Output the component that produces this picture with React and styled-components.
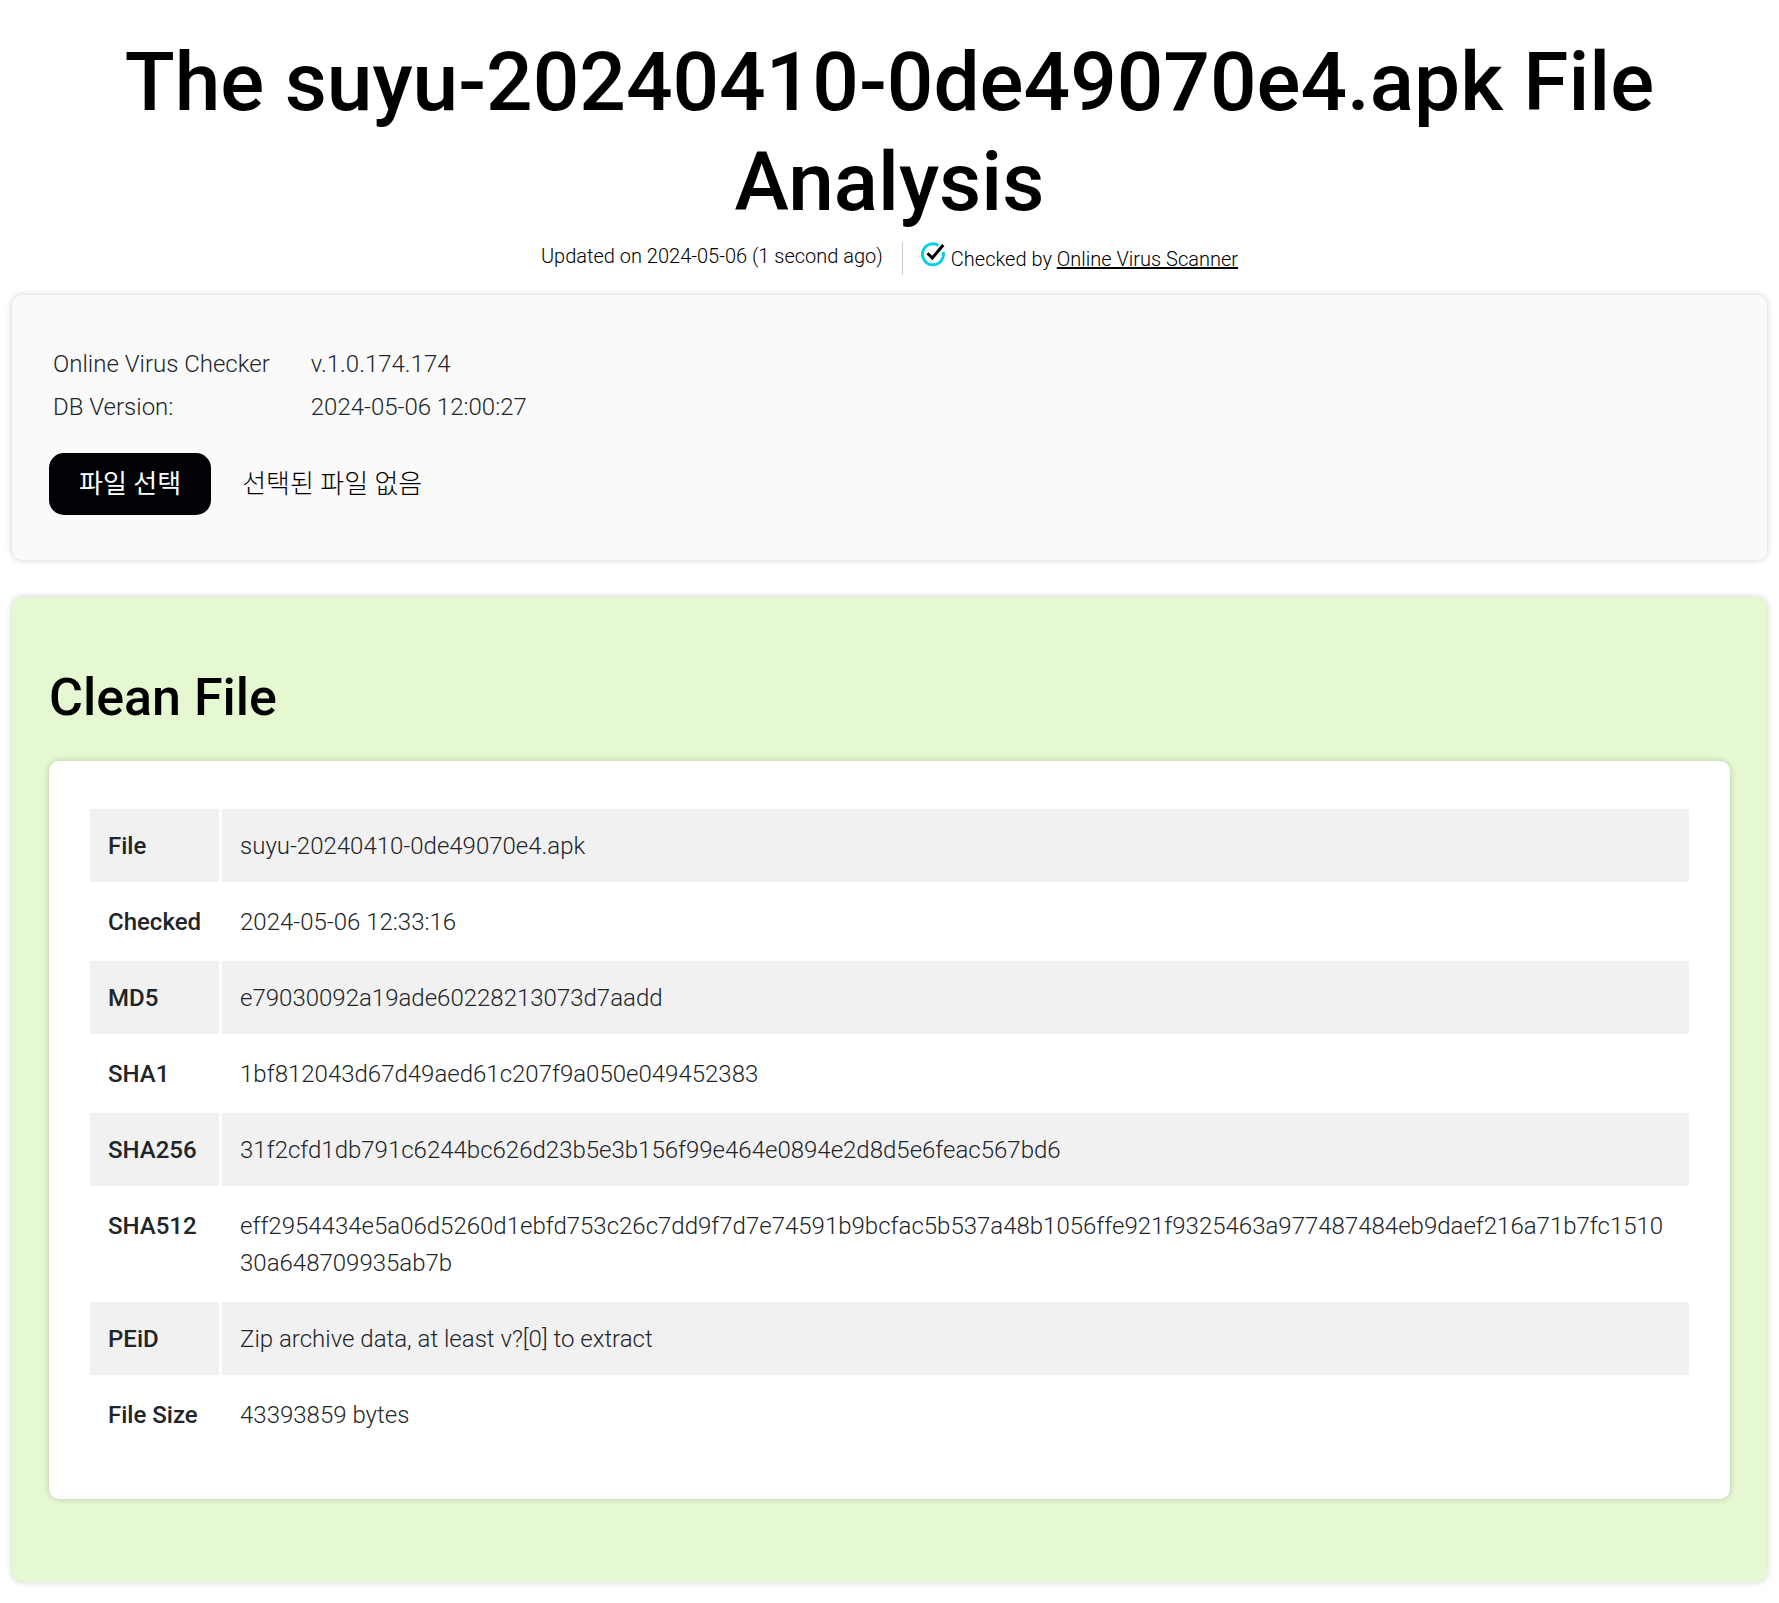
import React, { useRef, useState } from 'react';
import styled, { createGlobalStyle } from 'styled-components';

const GlobalStyle = createGlobalStyle`
  * {
    box-sizing: border-box;
  }
  body {
    margin: 0;
    background-color: #fff;
    color: #212529;
    font-family: Roboto, 'Noto Sans CJK KR', sans-serif;
    font-size: 24px;
    font-weight: 300;
    line-height: 37px;
  }
`
const Page = styled.main`
  padding: 32px 12px 20px;
`
const Title = styled.h1`
  margin: 0 auto;
  max-width: 1600px;
  color: #000;
  font-size: 82px;
  font-weight: 500;
  line-height: 100px;
  text-align: center;
`
const Meta = styled.div`
  display: flex;
  justify-content: center;
  margin: 10px 0 20px;
  color: #000;
  font-size: 20px;
  line-height: 32px;
`
const Updated = styled.div`
  padding: 0 19px 3px 0;
  line-height: 29px;
`
const CheckedBy = styled.div`
  padding-left: 18px;
  border-left: 1px solid #ccc;
`
const CheckIcon = styled.svg`
  width: 25px;
  height: 25px;
  margin-right: 5px;
  vertical-align: -1px;
`
const ScannerLink = styled.a`
  color: inherit;
  text-decoration: underline;
`
const Card = styled.section`
  padding: ${props => props.$padding};
  margin-bottom: ${props => props.$gap || '0'};
  border-radius: 10px;
  background-color: ${props => props.$color};
  box-shadow: 0 0 6px rgba(0, 0, 0, 0.2);
`
const VersionTable = styled.table`
  border-spacing: 2px;
  margin-bottom: 23px;

  th, td {
    padding: 2px;
    font-weight: 300;
    text-align: left;
  }
  th {
    padding-right: 37px;
  }
`
const FileRow = styled.div`
  display: flex;
  align-items: center;
  gap: 31px;
  color: #000;
  font-size: 26px;
`
const FileButton = styled.button`
  height: 62px;
  padding: 0 30px;
  border: 0;
  border-radius: 15px;
  background-color: #000205;
  color: #fff;
  font: inherit;
  font-weight: 400;
  cursor: pointer;
`
const Heading = styled.h2`
  margin: 0 0 32px;
  color: #000;
  font-size: 52px;
  font-weight: 500;
  line-height: 62px;
`
const ReportTable = styled.table`
  width: 100%;
  border-spacing: 3px;
`
const ReportRow = styled.tr`
  vertical-align: top;

  &:nth-child(odd) > * {
    background-color: #f1f1f1;
  }
`
const Name = styled.th`
  padding: 19px 18px 17px;
  font-weight: 500;
  text-align: left;
  white-space: nowrap;
`
const Value = styled.td`
  width: 100%;
  padding: 19px 18px 17px;
  word-break: break-all;
`

const report = [
  { name: 'File', value: 'suyu-20240410-0de49070e4.apk' },
  { name: 'Checked', value: '2024-05-06 12:33:16' },
  { name: 'MD5', value: 'e79030092a19ade60228213073d7aadd' },
  { name: 'SHA1', value: '1bf812043d67d49aed61c207f9a050e049452383' },
  { name: 'SHA256', value: '31f2cfd1db791c6244bc626d23b5e3b156f99e464e0894e2d8d5e6feac567bd6' },
  { name: 'SHA512', value: 'eff2954434e5a06d5260d1ebfd753c26c7dd9f7d7e74591b9bcfac5b537a48b1056ffe921f9325463a977487484eb9daef216a71b7fc151030a648709935ab7b' },
  { name: 'PEiD', value: 'Zip archive data, at least v?[0] to extract' },
  { name: 'File Size', value: '43393859 bytes' }
]

const FilePicker = () => {
  const input = useRef(null);
  const [fileName, setFileName] = useState('');

  const handleChange = (e) => {
    const file = e.target.files[0];
    setFileName(file ? file.name : '');
  }

  return (
    <FileRow>
      <input ref={input} type="file" aria-label="파일 선택" hidden onChange={handleChange} />
      <FileButton type="button" onClick={() => input.current.click()}>파일 선택</FileButton>
      <span>{fileName || '선택된 파일 없음'}</span>
    </FileRow>
  )
}

const App = () => {
  return (
    <Page>
      <GlobalStyle />
      <Title>The suyu-20240410-0de49070e4.apk File Analysis</Title>
      <Meta>
        <Updated>Updated on 2024-05-06 (1 second ago)</Updated>
        <CheckedBy>
          <CheckIcon viewBox="0 0 25 25" fill="none" aria-hidden="true">
            <path d="M17.3 3.2A10.5 10.5 0 1 0 22.2 9.8" stroke="#00cfe6" strokeWidth="2.9" />
            <path d="M6.5 11.3L11.3 16L22.3 3" stroke="#000" strokeWidth="3" />
          </CheckIcon>
          Checked by <ScannerLink href="#scanner">Online Virus Scanner</ScannerLink>
        </CheckedBy>
      </Meta>
      <Card $color="#fafafa" $padding="47px 37px 45px" $gap="37px">
        <VersionTable>
          <tbody>
            <tr>
              <th scope="row">Online Virus Checker</th>
              <td>v.1.0.174.174</td>
            </tr>
            <tr>
              <th scope="row">DB Version:</th>
              <td>2024-05-06 12:00:27</td>
            </tr>
          </tbody>
        </VersionTable>
        <FilePicker />
      </Card>
      <Card $color="#e5f8d2" $padding="70px 37px 83px">
        <Heading>Clean File</Heading>
        <Card $color="#fff" $padding="45px 38px">
          <ReportTable>
            <tbody>
              {report.map((item) => (
                <ReportRow key={item.name}>
                  <Name scope="row">{item.name}</Name>
                  <Value>{item.value}</Value>
                </ReportRow>
              ))}
            </tbody>
          </ReportTable>
        </Card>
      </Card>
    </Page>
  )
}

export default App;
